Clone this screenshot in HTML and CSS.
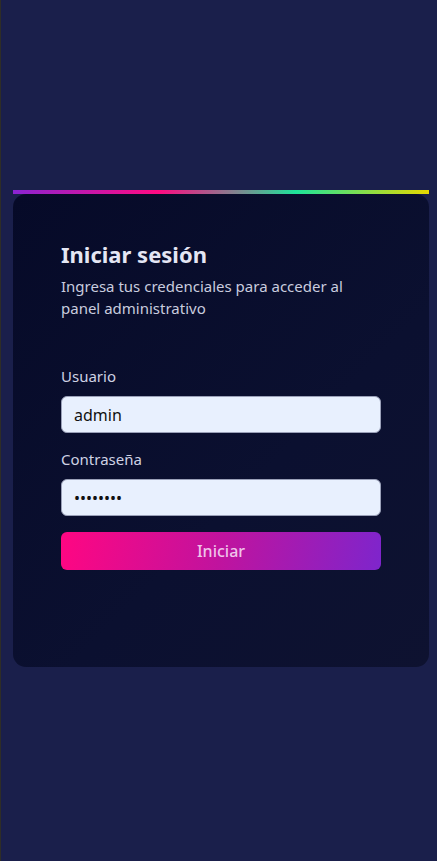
FILE: index.html
```html
<!DOCTYPE html>
<html lang="es">
<head>
<meta charset="utf-8">
<title>Iniciar sesión</title>
<link rel="stylesheet" href="styles.css">
</head>
<body>
<main class="page">
  <section class="login">
    <div class="accent"></div>
    <div class="card">
      <h1 class="title">Iniciar sesión</h1>
      <p class="subtitle">Ingresa tus credenciales para acceder al panel administrativo</p>
      <form class="form">
        <label class="label" for="user">Usuario</label>
        <input class="input" id="user" type="text" value="admin">
        <label class="label" for="pass">Contraseña</label>
        <input class="input" id="pass" type="password" value="12345678">
        <button class="button" type="button">Iniciar</button>
      </form>
    </div>
  </section>
</main>
</body>
</html>
```

FILE: styles.css
```css
* { box-sizing: border-box; }
html, body {
  margin: 0;
  height: 100%;
}
body {
  background: #1a1f4b;
  font-family: "Noto Sans", "DejaVu Sans", sans-serif;
  border-left: 1px solid #2e2d27;
}
.page {
  padding: 190px 8px 0 12px;
}
.login {
  width: 416px;
}
.accent {
  height: 4px;
  background: linear-gradient(90deg, #8a24d2 0%, #ff0a82 35%, #1ee39a 68%, #e6d800 100%);
}
.card {
  background: linear-gradient(135deg, #060a28 0%, #0b1030 60%, #0e1230 100%);
  border-radius: 13px;
  padding: 45px 48px 97px 48px;
}
.title {
  margin: 0;
  font-size: 22px;
  font-weight: 700;
  line-height: 30px;
  color: #e4e6f4;
}
.subtitle {
  margin: 6px 0 0;
  font-size: 15px;
  line-height: 22px;
  color: #c9ccdf;
}
.form {
  display: flex;
  flex-direction: column;
  margin-top: 46px;
}
.label {
  font-size: 15px;
  line-height: 22px;
  color: #cfd2e4;
  margin-bottom: 9px;
}
.input {
  height: 37px;
  border: 1px solid #9aa0b8;
  border-radius: 6px;
  background: #e8f0fe;
  padding: 0 12px;
  font-family: inherit;
  font-size: 16px;
  color: #111;
  margin-bottom: 15px;
  outline: none;
}
.button {
  margin-top: 1px;
  height: 38px;
  border: none;
  border-radius: 6px;
  background: linear-gradient(100deg, #ff0682 0%, #c0139e 50%, #7e25cc 100%);
  font-family: inherit;
  font-size: 16px;
  font-weight: 500;
  color: #efc3ea;
}
```
